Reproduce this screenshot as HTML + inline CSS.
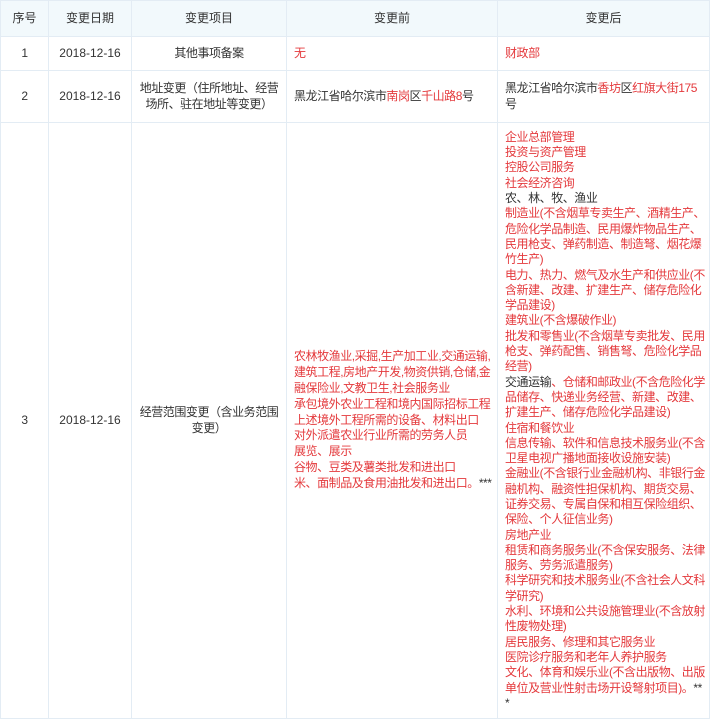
<!DOCTYPE html>
<html><head><style>
body{margin:0;background:#fff;font-family:"Liberation Sans","Noto Sans CJK SC",sans-serif;font-size:12px;color:#333;}
table{position:absolute;left:0;top:0;border-collapse:collapse;width:709px;table-layout:fixed;font-size:12px;}
td,th{border:1px solid #e3ecf4;padding:0 7px;vertical-align:middle;line-height:15.3px;font-size:12px;white-space:nowrap;overflow:visible;letter-spacing:-0.45px;}
th{background:#f2f9fc;font-weight:normal;height:35px;text-align:center;letter-spacing:0}
td div{height:15.3px;overflow:visible;}
td.m div{height:15.8px;}
.c{text-align:center}
.r{color:#e4393c}
.k{color:#333}
</style></head><body>
<table>
<colgroup><col style="width:48px"><col style="width:83px"><col style="width:155px"><col style="width:211px"><col style="width:212px"></colgroup>
<tr><th>序号</th><th>变更日期</th><th>变更项目</th><th>变更前</th><th>变更后</th></tr>
<tr style="height:34px"><td class="c">1</td><td class="c" style="letter-spacing:0">2018-12-16</td><td class="c">其他事项备案</td><td class="r">无</td><td class="r">财政部</td></tr>
<tr style="height:52px"><td class="c">2</td><td class="c" style="letter-spacing:0">2018-12-16</td><td class="c m"><div>地址变更（住所地址、经营</div><div>场所、驻在地址等变更）</div></td><td>黑龙江省哈尔滨市<span class="r">南岗</span>区<span class="r">千山路8</span>号</td><td class="m"><div>黑龙江省哈尔滨市<span class="r">香坊</span>区<span class="r">红旗大街175</span></div><div>号</div></td></tr>
<tr style="height:596px"><td class="c">3</td><td class="c" style="letter-spacing:0">2018-12-16</td><td class="c m"><div>经营范围变更（含业务范围</div><div>变更）</div></td>
<td class="r m"><div>农林牧渔业,采掘,生产加工业,交通运输,</div><div>建筑工程,房地产开发,物资供销,仓储,金</div><div>融保险业,文教卫生,社会服务业</div><div>承包境外农业工程和境内国际招标工程</div><div>上述境外工程所需的设备、材料出口</div><div>对外派遣农业行业所需的劳务人员</div><div>展览、展示</div><div>谷物、豆类及薯类批发和进出口</div><div>米、面制品及食用油批发和进出口。<span class="k">***</span></div></td>
<td class="r"><div>企业总部管理</div><div>投资与资产管理</div><div>控股公司服务</div><div>社会经济咨询</div><div class="k">农、林、牧、渔业</div><div>制造业(不含烟草专卖生产、酒精生产、</div><div>危险化学品制造、民用爆炸物品生产、</div><div>民用枪支、弹药制造、制造弩、烟花爆</div><div>竹生产)</div><div>电力、热力、燃气及水生产和供应业(不</div><div>含新建、改建、扩建生产、储存危险化</div><div>学品建设)</div><div>建筑业(不含爆破作业)</div><div>批发和零售业(不含烟草专卖批发、民用</div><div>枪支、弹药配售、销售弩、危险化学品</div><div>经营)</div><div><span class="k">交通运输</span>、仓储和邮政业(不含危险化学</div><div>品储存、快递业务经营、新建、改建、</div><div>扩建生产、储存危险化学品建设)</div><div>住宿和餐饮业</div><div>信息传输、软件和信息技术服务业(不含</div><div>卫星电视广播地面接收设施安装)</div><div>金融业(不含银行业金融机构、非银行金</div><div>融机构、融资性担保机构、期货交易、</div><div>证券交易、专属自保和相互保险组织、</div><div>保险、个人征信业务)</div><div>房地产业</div><div>租赁和商务服务业(不含保安服务、法律</div><div>服务、劳务派遣服务)</div><div>科学研究和技术服务业(不含社会人文科</div><div>学研究)</div><div>水利、环境和公共设施管理业(不含放射</div><div>性废物处理)</div><div>居民服务、修理和其它服务业</div><div>医院诊疗服务和老年人养护服务</div><div>文化、体育和娱乐业(不含出版物、出版</div><div>单位及营业性射击场开设弩射项目)。<span class="k">**</span></div><div class="k">*</div></td></tr>
</table>
</body></html>
